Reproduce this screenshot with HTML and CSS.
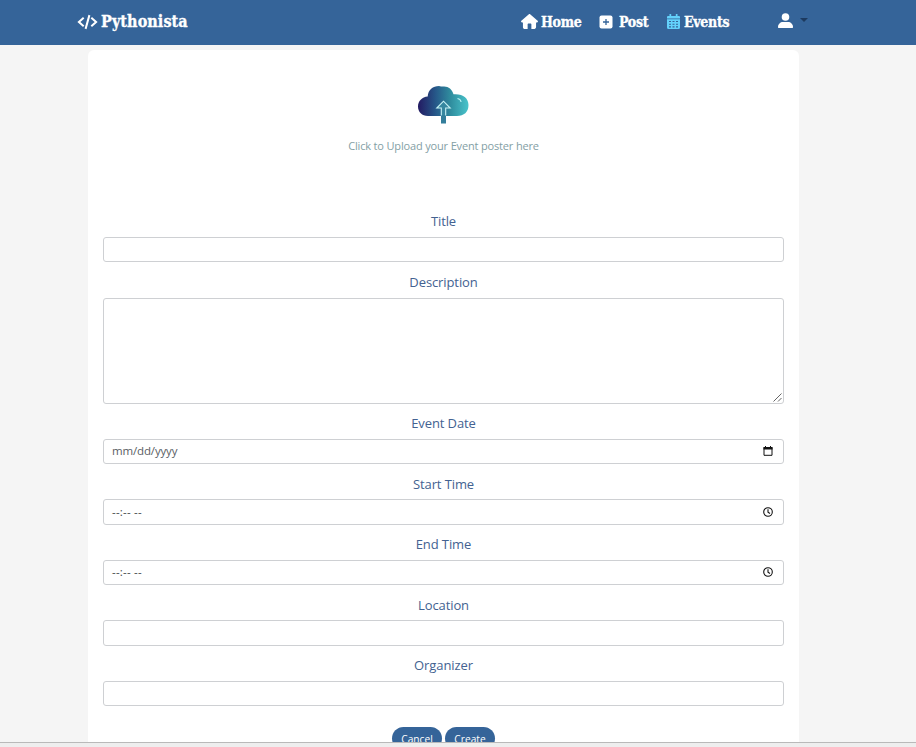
FILE: index.html
```
<!DOCTYPE html>
<html lang="en">
<head>
<meta charset="utf-8">
<title>Pythonista</title>
<link rel="stylesheet" href="styles.css">
</head>
<body>
<header class="navbar">
  <a class="brand"><svg class="code-icon" viewBox="0 0 22 16" fill="none" stroke="currentColor" stroke-width="2.1"><path d="M7 3.6 2 8l5 4.4M15 3.6 20 8l-5 4.4M13 .8 9 15.2"/></svg><span class="brand-name">Pythonista</span></a>
  <nav class="links">
    <a class="link home"><svg viewBox="0 0 576 512" width="17" height="15" fill="currentColor"><path d="M575.8 255.500c0 18-15 32.100-32 32.100h-32l.7 160.200c0 35-28 64.200-56 64.200H352V352c0-18-14-32-32-32h-64c-18 0-32 14-32 32v160H128c-35 0-64-28-64-64V287.600H32c-18 0-32-14-32-32.100 0-9 3-17 10-24L266.400 8c7-7 15-8 22-8s15 2 21 7l255.400 224.500c8 7 12 15 11 24z"/></svg><span>Home</span></a>
    <a class="link post"><svg viewBox="0 0 14 14" width="14" height="14"><rect x=".5" y=".5" width="13" height="13" rx="2" fill="currentColor"/><path class="plus" d="M7 4v6M4 7h6"/></svg><span>Post</span></a>
    <a class="link events"><svg class="cyan" viewBox="0 0 13 15" width="13" height="15"><path fill="currentColor" d="M2.500 0h1.700v2h4.600V0h1.700v2H12a1 1 0 0 1 1 1v1.400H0V3a1 1 0 0 1 1-1h1.500zM0 5.300h13V13.500a1.500 1.500 0 0 1-1.500 1.500h-10A1.500 1.500 0 0 1 0 13.500z"/><path class="cells" d="M2 7.500h2m1.500 0h2m1.500 0h2M2 10.200h2m1.500 0h2m1.500 0h2M2 12.900h2m1.500 0h2m1.500 0h2"/></svg><span>Events</span></a>
    <a class="user"><svg viewBox="0 0 15 15" width="15" height="15" fill="currentColor"><circle cx="7.500" cy="4" r="3.800"/><path d="M0 14.300C0 11 2.300 9 5 9h5c2.700 0 5 2 5 5.300 0 .4-.2.700-.6.700H.6c-.4 0-.6-.3-.6-.7z"/></svg><i class="caret"></i></a>
  </nav>
</header>
<main class="card">
  <div class="upload">
    <svg class="cloud" viewBox="0 0 52 40" width="52" height="40">
      <defs><linearGradient id="sky" x1="0" x2="1"><stop offset="0" stop-color="#231a62"/><stop offset=".35" stop-color="#265889"/><stop offset=".65" stop-color="#308e9f"/><stop offset="1" stop-color="#49c4cb"/></linearGradient></defs>
      <path fill="url(#sky)" d="M11 31C5 31 1 27 1 21.500S5 12 10.700 11.500C11 5 16 1 22 1q2 .6 4 .6c5-.6 9 2.400 10.500 7.600C46 8.500 51.500 13 51.500 20S47 31 40 31z"/>
      <path d="M24 30.500h5V38.500h-5z" fill="#337e9b"/>
      <path d="M24.300 30.500V23h-4.500l6.700-6.800 6.700 6.800h-4.500v7.500" fill="#3687a0" stroke="#c8f3f5" stroke-width="1.100"/>
      <path d="M40.500 13.500c2 .3 3.300 1.500 3.600 3.500" fill="none" stroke="#b9f2f4" stroke-width="1.100"/>
    </svg>
    <p class="hint">Click to Upload your Event poster here</p>
  </div>
  <form class="form">
    <label class="label">Title</label><div class="control"></div>
    <label class="label">Description</label>
    <div class="control area"><svg class="grip" viewBox="0 0 9 9" width="9" height="9"><path d="M.5 8.500l8-8M5 8.500l3.500-3.500"/></svg></div>
    <label class="label">Event Date</label>
    <div class="control"><span class="value">mm/dd/yyyy</span><svg class="date-icon" viewBox="0 0 10 10" width="10" height="10"><path d="M1 1.500h8v7.800H1z" fill="none" stroke="#111" stroke-width="1"/><path d="M.5 1h9v2.500h-9zM2 0h1v1H2zM7 0h1v1H7z" fill="#111"/></svg></div>
    <label class="label">Start Time</label>
    <div class="control"><span class="value time">--:-- --</span><svg class="time-icon" viewBox="0 0 10 10" width="10" height="10"><circle cx="5" cy="5" r="4.300"/><path d="M5 2.300V5.200l2 1.300"/></svg></div>
    <label class="label">End Time</label>
    <div class="control"><span class="value time">--:-- --</span><svg class="time-icon" viewBox="0 0 10 10" width="10" height="10"><circle cx="5" cy="5" r="4.300"/><path d="M5 2.300V5.200l2 1.300"/></svg></div>
    <label class="label">Location</label><div class="control"></div>
    <label class="label">Organizer</label><div class="control"></div>
    <div class="actions"><button class="btn" type="button">Cancel</button><button class="btn" type="button">Create</button></div>
  </form>
</main>
<footer class="edge"></footer>
</body>
</html>
```
FILE: styles.css
```
* { box-sizing: border-box; }
html, body { height: 100%; overflow: hidden; }
body {
  margin: 0;
  display: flex;
  flex-direction: column;
  background: #f5f5f5;
  font-family: "Open Sans", sans-serif;
}
.navbar {
  flex: none;
  height: 45px;
  padding: 0 108px 2px 77px;
  display: flex;
  align-items: center;
  justify-content: space-between;
  background: #356499;
  color: #fff;
  font: bold 14px "DejaVu Serif Condensed", "DejaVu Serif", serif;
  -webkit-text-stroke: .3px #fff;
}
.brand, .link, .user { display: flex; align-items: center; white-space: nowrap; }
.brand { gap: 3px; }
.brand-name { width: 88px; font-size: 16px; letter-spacing: .08px; }
.code-icon { width: 21px; height: 16px; }
.links { display: flex; align-items: center; }
.link { gap: 3px; font-size: 14px; letter-spacing: -.3px; }
.home { width: 78px; }
.post { width: 68px; gap: 6px; }
.events { width: 111px; gap: 4px; }
.plus { fill: none; stroke: #356499; stroke-width: 1.3; }
.cyan { color: #63d1fb; }
.cells { fill: none; stroke: #356499; stroke-width: 1.1; }
.user { width: 30px; gap: 7px; }
.user svg { margin-top: -2px; }
.caret { margin-top: -3px; border: 4px solid transparent; border-top-color: #1d3a5f; border-bottom: 0; }
.card {
  flex: 1;
  min-height: 0;
  overflow: hidden;
  width: 711px;
  margin: 5px 0 0 88px;
  padding: 0 15px;
  border-radius: 6px 6px 0 0;
  background: #fff;
}
.upload {
  height: 151.75px;
  padding-top: 35px;
  display: flex;
  flex-direction: column;
  align-items: center;
}
.cloud { flex: none; margin-right: 1px; }
.hint { margin: 13px 0 0; font-size: 11px; line-height: 16px; color: #84a0a5; white-space: nowrap; letter-spacing: -.16px; }
.form { display: flex; flex-direction: column; }
.label { height: 35.25px; padding-top: 9.7px; line-height: 20px; text-align: center; font-size: 13px; letter-spacing: -.1px; color: #436291; }
.control {
  height: 25.25px;
  padding: 0 10px 0 8px;
  display: flex;
  align-items: center;
  justify-content: space-between;
  border: 1px solid #ced0d3;
  border-radius: 3px;
  background: #fff;
}
.area { height: 106px; padding: 0 1px 1px; align-items: flex-end; justify-content: flex-end; }
.grip { fill: none; stroke: #555; stroke-width: .9; }
.value { font-size: 11.5px; line-height: 16px; letter-spacing: -.15px; color: #5a5e64; }
.time { letter-spacing: .2px; color: #44484e; }
.time-icon { fill: none; stroke: #111; stroke-width: 1.1; }
.actions { display: flex; justify-content: center; gap: 3px; padding-top: 21px; }
.btn {
  width: 50px;
  height: 23px;
  padding: 0;
  border: 0;
  border-radius: 12px;
  background: #356499;
  color: #fff;
  font: 10.2px "Open Sans", sans-serif;
}
.edge { flex: none; height: 5px; border-top: 1px solid #b9b9b9; background: #eee; }
```
